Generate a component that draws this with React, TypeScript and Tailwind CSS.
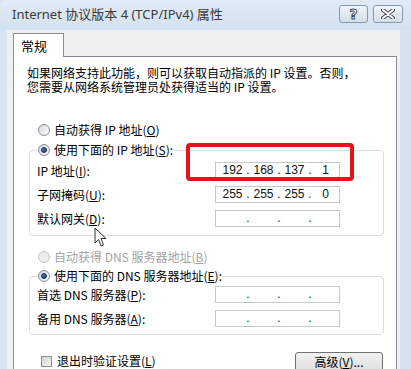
import React from 'react';

const cjk = { fontFamily: '"Noto Sans CJK SC", "Noto Sans", sans-serif' };

const Radio = ({ checked, disabled }: { checked?: boolean; disabled?: boolean }) => (
  <span
    className={`relative inline-flex w-[12px] h-[12px] rounded-full border items-center justify-center mr-[4px] shrink-0 ${
      disabled ? 'border-[#c8c8c8] bg-[#ececec]' : 'border-[#8a8f95] bg-gradient-to-br from-[#d2d4d8] to-[#ffffff]'
    }`}
  >
    {checked && (
      <span className="w-[6px] h-[6px] rounded-full bg-gradient-to-br from-[#5f95c9] to-[#14365a] border border-[#0f2d4c]" />
    )}
  </span>
);

const Acc = ({ k }: { k: string }) => (
  <span>
    (<u>{k}</u>)
  </span>
);

const IpBox = ({ parts }: { parts: string[] }) => (
  <div className="w-[125px] h-[17px] border border-[#c3c8cf] bg-white flex items-center pl-[3px] text-[12px] text-[#111]" style={{ fontFamily: '"Liberation Sans", Arial, sans-serif' }}>
    {parts.map((p, i) => (
      <React.Fragment key={i}>
        <span className="w-[27px] text-center leading-[15px]">{p}</span>
        {i < 3 && <span className="w-[4px] text-center leading-[15px]">.</span>}
      </React.Fragment>
    ))}
  </div>
);

const Row = ({ label, parts }: { label: React.ReactNode; parts: string[] }) => (
  <div className="flex items-center h-[17px]">
    <span className="w-[178px] text-[12px] leading-[16px] text-black">{label}</span>
    <IpBox parts={parts} />
  </div>
);

const Group = ({ legend, children }: { legend: React.ReactNode; children: React.ReactNode }) => (
  <fieldset className="ml-[15px] mr-[12px] border border-[#d5dfe5] rounded-[4px] px-[7px]">
    <legend className="px-[1px] h-[16px] flex items-center text-[12px] leading-[16px]">{legend}</legend>
    {children}
  </fieldset>
);

export default function App() {
  return (
    <div className="relative w-[411px] h-[369px] overflow-hidden bg-[#d6e3f1]" style={cjk}>
      {/* title bar */}
      <div className="h-[30px] flex items-center pl-[12px] pr-[8px] bg-gradient-to-b from-[#e1ebf6] to-[#d3e1ef] rounded-tl-[6px]">
        <span className="text-[13px] text-[#3a3a3a] flex-1" style={{ fontFamily: '"Noto Sans", "Noto Sans CJK SC", sans-serif' }}>
          Internet 协议版本 4 (TCP/IPv4) 属性
        </span>
        <div className="flex gap-[5px] -mt-[3px]">
          <div className="w-[29px] h-[18px] rounded-[3px] border border-[#8799ad] bg-gradient-to-b from-[#f1f5fa] to-[#d3deea] flex items-center justify-center">
            <span className="text-[14px] font-bold text-white leading-none [-webkit-text-stroke:1px_#4a4f57]" style={{ fontFamily: '"DejaVu Sans", sans-serif' }}>?</span>
          </div>
          <div className="w-[30px] h-[18px] rounded-[3px] border border-[#8799ad] bg-gradient-to-b from-[#f1f5fa] to-[#d3deea] flex items-center justify-center">
            <svg width="14" height="10" viewBox="0 0 14 10">
              <path d="M2 1 L12 9 M12 1 L2 9" stroke="#4a4f57" strokeWidth="4" strokeLinecap="round" />
              <path d="M2 1 L12 9 M12 1 L2 9" stroke="#ffffff" strokeWidth="2" strokeLinecap="round" />
            </svg>
          </div>
        </div>
      </div>

      {/* dialog body */}
      <div className="ml-[7px] mr-[11px] h-[339px] bg-[#f0f0f0] pl-[6px] pr-[3px] pt-[3px]">
        <div className="relative z-10 w-[51px] h-[24px] -mb-px border border-b-0 border-[#898c95] bg-white pl-[7px] pt-[3px] text-[13px] leading-[18px] text-black">
          常规
        </div>
        <div className="h-[320px] border border-[#898c95] bg-white">
          <p className="mt-[9px] pl-[13px] text-[12px] leading-[14px] text-black">
            如果网络支持此功能，则可以获取自动指派的 IP 设置。否则，
            <br />
            您需要从网络系统管理员处获得适当的 IP 设置。
          </p>

          <div className="mt-[28px] pl-[24px] h-[16px] flex items-center text-[12px] text-black">
            <Radio />
            自动获得 IP 地址<Acc k="O" />
          </div>

          <div className="mt-[4px]">
            <Group
              legend={
                <>
                  <Radio checked />
                  使用下面的 IP 地址<Acc k="S" />:
                </>
              }
            >
              <div className="mt-[4px] pb-[8px] flex flex-col gap-[7px]">
                <Row label={<>IP 地址<Acc k="I" />:</>} parts={['192', '168', '137', '1']} />
                <Row label={<>子网掩码<Acc k="U" />:</>} parts={['255', '255', '255', '0']} />
                <Row label={<>默认网关<Acc k="D" />:</>} parts={['', '', '', '']} />
              </div>
            </Group>
          </div>

          <div className="mt-[13px] pl-[24px] h-[16px] flex items-center text-[12px] text-[#a3a3a3]">
            <Radio disabled />
            自动获得 DNS 服务器地址<Acc k="B" />
          </div>

          <div className="mt-[3px]">
            <Group
              legend={
                <>
                  <Radio checked />
                  使用下面的 DNS 服务器地址<Acc k="E" />:
                </>
              }
            >
              <div className="mt-[2px] pb-[7px] flex flex-col gap-[7px]">
                <Row label={<>首选 DNS 服务器<Acc k="P" />:</>} parts={['', '', '', '']} />
                <Row label={<>备用 DNS 服务器<Acc k="A" />:</>} parts={['', '', '', '']} />
              </div>
            </Group>
          </div>

          <div className="mt-[17px] pl-[27px] pr-[13px] flex items-start justify-between">
            <div className="mt-[2px] flex items-center text-[12px] leading-[14px] text-black">
              <span className="w-[11px] h-[11px] border border-[#8e8f8f] bg-gradient-to-br from-[#cfd1d4] to-[#f4f4f4] mr-[5px]" />
              退出时验证设置<Acc k="L" />
            </div>
            <div className="w-[88px] h-[23px] rounded-[3px] border border-[#707070] bg-gradient-to-b from-[#f2f2f2] to-[#dcdcdc] flex items-start justify-center pt-[2px] text-[12px] leading-[14px] text-black">
              高级<Acc k="V" />...
            </div>
          </div>
        </div>
      </div>

      {/* red highlight annotation */}
      <div className="absolute left-[186px] top-[143px] w-[168px] h-[38px] border-4 border-[#e2151c] rounded-[4px]" />

      {/* mouse cursor */}
      <svg className="absolute left-[94px] top-[227px]" width="14" height="21" viewBox="0 0 14 21">
        <path d="M1 1 L1 16 L4.5 12.5 L7 19 L9.5 18 L7 11.5 L12 11.5 Z" fill="#ffffff" stroke="#333" strokeWidth="1" strokeLinejoin="round" />
      </svg>
    </div>
  );
}
